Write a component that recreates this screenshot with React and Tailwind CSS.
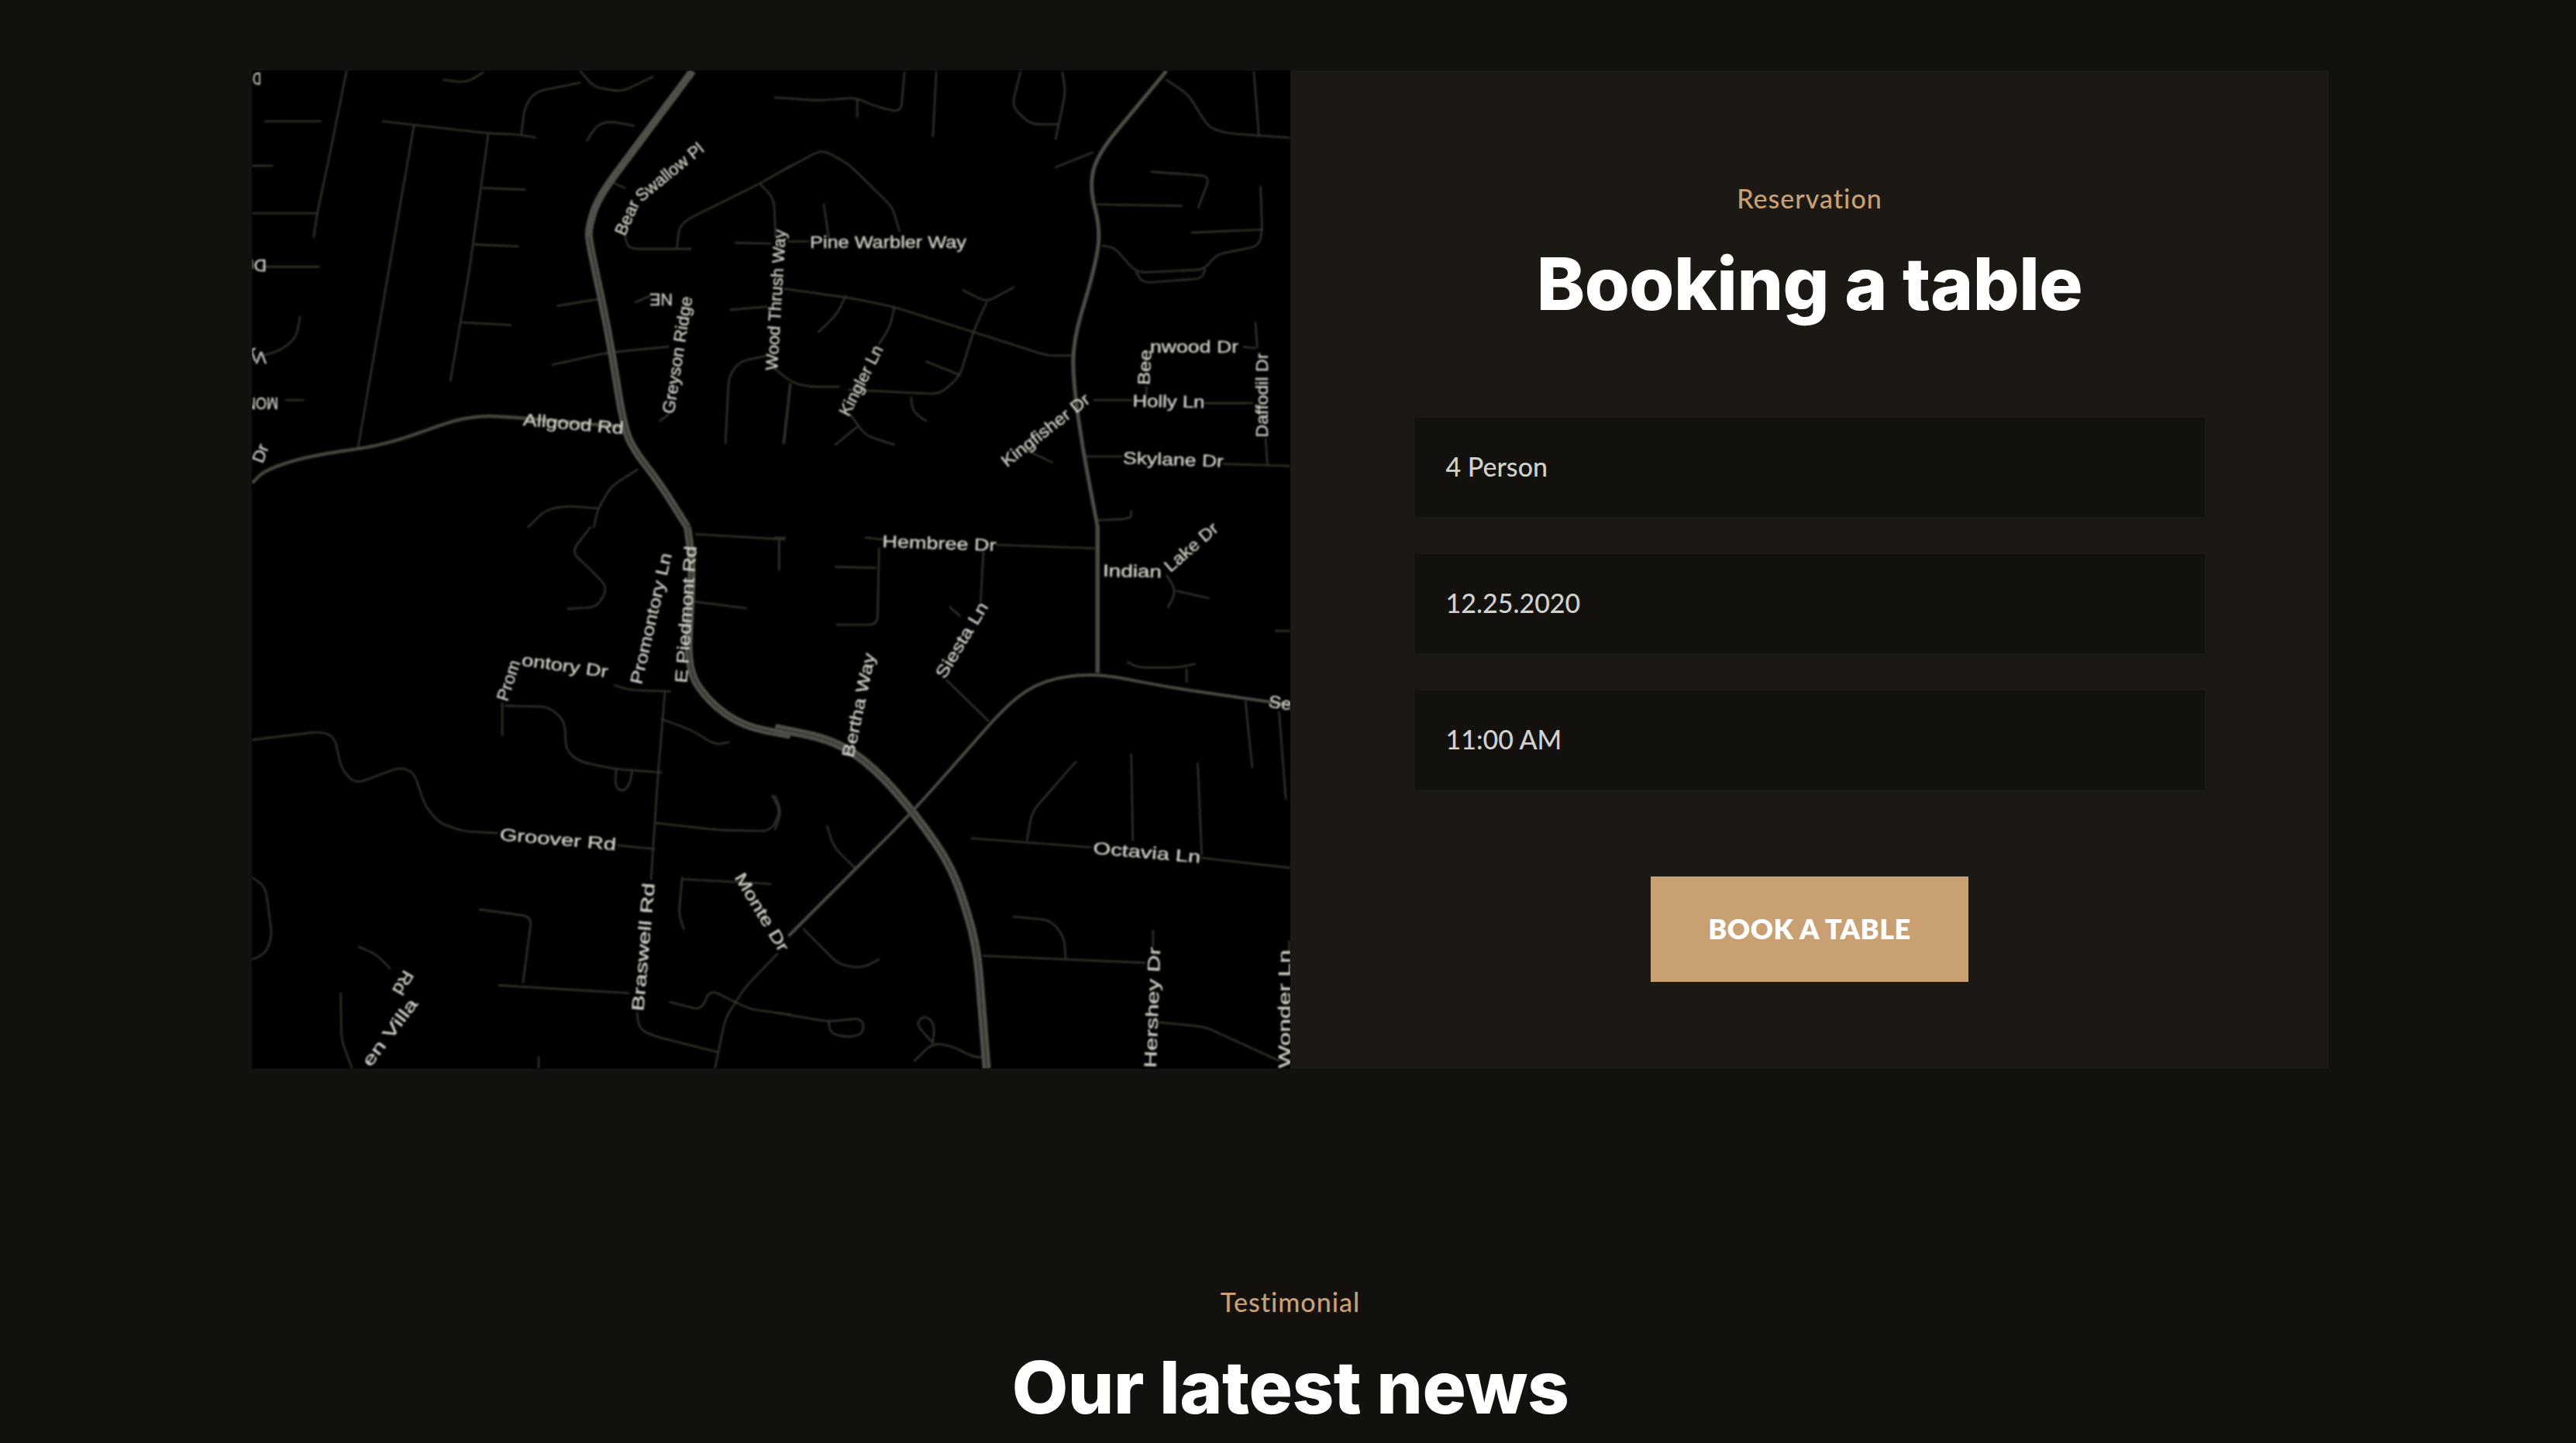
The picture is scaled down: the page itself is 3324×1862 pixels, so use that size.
const z1 = ([x, y]) => [320 + x / 2.24, 80 + y / 2.613];
const z2 = ([x, y]) => [1000 + x / 2.306, 80 + y / 2.613];
const z3 = ([x, y]) => [320 + x / 2.24, 680 + y / 2.178];
const z4 = ([x, y]) => [1000 + x / 2.306, 680 + y / 2.178];

function toPath(flat, map, r = 12) {
  const p = [];
  for (let i = 0; i < flat.length; i += 2) p.push(map([flat[i], flat[i + 1]]));
  let d = `M${p[0][0].toFixed(1)} ${p[0][1].toFixed(1)}`;
  for (let i = 1; i < p.length - 1; i++) {
    const a = p[i - 1], b = p[i], c = p[i + 1];
    const la = Math.hypot(a[0] - b[0], a[1] - b[1]);
    const lc = Math.hypot(c[0] - b[0], c[1] - b[1]);
    const ra = Math.min(r, la / 2) / la, rc = Math.min(r, lc / 2) / lc;
    d += `L${(b[0] + (a[0] - b[0]) * ra).toFixed(1)} ${(b[1] + (a[1] - b[1]) * ra).toFixed(1)}`;
    d += `Q${b[0].toFixed(1)} ${b[1].toFixed(1)} ${(b[0] + (c[0] - b[0]) * rc).toFixed(1)} ${(b[1] + (c[1] - b[1]) * rc).toFixed(1)}`;
  }
  const e = p[p.length - 1];
  return d + `L${e[0].toFixed(1)} ${e[1].toFixed(1)}`;
}

const minor1 = [
  [285,30,235,320,200,510,190,590],[12,510,200,510],[12,350,70,350],[50,200,210,200],[40,690,205,690],
  [390,200,480,212,690,240,790,245,830,255],[480,212,400,750,318,1300],[695,240,640,700,585,1075],
  [680,425,800,430],[655,615,780,622],[620,878,760,887],[790,245,800,150,830,100,960,70],
  [960,30,1000,85,1080,100,1170,50],[565,60,630,70,680,35],[150,860,140,930,90,975,40,990],[110,1140,160,1140],
  [980,265,1010,210,1050,200,1115,215],[895,822,1010,800],[880,1020,1040,980,1215,960],[1060,410,1090,425],
  [1090,590,1100,630,1280,630],[1240,630,1245,560,1270,530,1480,410,1568,350],[1480,410,1520,460,1525,590],
  [1410,610,1510,612],[1395,835,1500,825],[1120,810,1160,790],[1380,1285,1390,1060,1420,1010,1500,990],
  [1568,1090,1550,1285],[1190,1210,1215,1190],[1125,1375,1050,1430,1010,1510,1000,1568],[810,1568,860,1510,920,1497,1010,1505],
];
const minor2 = [
  [0,120,130,130,240,120,300,150,375,170,385,35],[245,125,245,185],[480,35,470,250],[730,35,705,150,760,210,840,210],
  [855,35,865,100,835,260],[1165,60,1230,110,1290,220,1340,240,1530,255],[1425,35,1440,250],[835,355,945,305],
  [0,380,140,295,220,345,350,490,370,570],[145,480,160,590],[40,605,100,605],[30,765,220,795,350,825,590,910,810,990,885,990],
  [210,790,185,850,130,910],[355,830,340,900,310,950],[560,770,630,810,710,760],[630,810,590,910,550,1060,490,1120,220,1105],
  [450,1010,550,1055],[0,1035,50,1080,100,1095,190,1095],[45,1085,25,1285],[405,1130,410,1180,450,1210],
  [225,1190,270,1260,355,1290],[245,1230,180,1290],[750,1310,825,1350],
  [975,620,1010,625,1075,710,1280,700,1310,650,1440,620,1450,570,1445,420],[1240,575,1450,565],[960,480,1210,485],
  [1120,370,1295,385,1260,490],[1075,710,1095,745,1270,730,1280,700],[950,1140,1060,1140],[1280,1150,1420,1150],
  [1430,880,1435,960],[1395,960,1430,965],[1105,1095,1105,1120],[920,1330,1030,1330],[1335,1355,1530,1362],
  [1460,1270,1465,1355],[960,1545,1060,1540,1060,1515],
];
const minor3 = [
  [1295,20,1550,35],[1535,40,1535,120],[990,0,935,70,990,120,1040,170,1010,225,925,230],[1290,210,1440,228],
  [1060,445,1100,458,1220,462],[1205,465,1185,700,1165,990],[735,495,735,585],
  [745,503,870,505,915,545,920,630,960,660,1060,680,1195,690],[1195,540,1280,570,1350,612,1390,605],
  [1065,680,1060,730,1085,745,1105,720,1110,685],
  [12,598,210,575,250,590,270,680,310,722,440,675,480,690,510,780,550,830,620,855,720,860],
  [1070,895,1175,905],[1180,832,1360,852,1510,855,1540,800,1515,755],[1260,990,1510,1003],[1255,985,1245,1090,1260,1130],
  [670,1075,820,1095,795,1280],[725,1288,1100,1310],[12,985,50,1010,70,1150,50,1200,12,1215],[320,1180,370,1200,410,1240],
  [268,1310,270,1440,300,1520],[840,1490,840,1520],[1125,1365,1130,1410,1170,1430,1355,1475],
  [1530,1200,1440,1290,1380,1380,1350,1520],[1220,1335,1310,1358,1335,1300,1450,1355,1568,1370],
];
const minor4 = [
  [270,30,320,35],[660,50,950,60],[310,60,305,275,185,275],[180,112,300,115],[620,70,612,210],[510,430,635,545],[520,225,550,250],
  [0,30,30,30],[12,50,12,120],[1165,135,1195,180,1170,225],[1195,180,1290,200],[1050,380,1080,395,1200,395,1250,385],
  [1225,400,1225,435],[1400,490,1420,675],[1500,520,1520,765],[1490,292,1533,292],[1060,640,1065,880],[1258,665,1270,920],
  [895,660,765,800,750,880],[585,875,940,900],[1270,930,1533,958],[155,840,175,900,240,960],[85,1130,190,1230,260,1240,310,1215],
  [710,1095,820,1105,860,1150,865,1215],[620,1205,1100,1225],[1125,1135,1125,1175],[1145,1392,1280,1405,1500,1500],
  [0,1365,160,1390,260,1380,265,1420,230,1435,165,1425,160,1390],[415,1500,470,1450,530,1460,590,1490,625,1490],
  [470,1450,445,1425,420,1395,445,1372,475,1395,470,1450],[0,850,20,800,0,755],[1530,1165,1530,1190],
];

const labels = [
  ["Bear", 809, 281, 47, -66], ["Swallow Pl", 864, 222, 106, -39], ["Wood Thrush Way", 1001, 387, 182, -86.5],
  ["Greyson Ridge", 874, 458, 153, -81], ["NE", 853, 386, 30, 180], ["Allgood Rd", 740, 547, 130, 5],
  ["Dr", 332, 342, 24, 180], ["Vy", 332, 461, 24, 180], ["MON", 338, 520, 42, 180], ["Dr", 336, 585, 24, -70], ["Dr", 329, 101, 16, 180],
  ["Pine Warbler Way", 1146, 312, 202, 0], ["Kingfisher Dr", 1349, 555, 138, -38], ["Kingler Ln", 1111, 491, 99, -63],
  ["Bee", 1477, 474, 46, -87], ["nwood Dr", 1541, 447, 114, 0], ["Holly Ln", 1508, 518, 93, 1], ["Daffodil Dr", 1628, 510, 109, -90],
  ["Skylane Dr", 1514, 593, 130, 2], ["Hembree Dr", 1212, 701, 147, 2], ["Indian", 1461, 737, 76, 1], ["Lake Dr", 1537, 706, 84, -41],
  ["Siesta Ln", 1241, 826, 110, -59], ["Bertha Way", 1108, 910, 137, -78], ["Se", 1652, 907, 30, 8],
  ["Octavia Ln", 1480, 1100, 139, 5], ["Hershey Dr", 1487, 1300, 156, -88], ["Wonder Ln", 1657, 1302, 153, -90],
  ["Monte Dr", 983, 1177, 114, 59], ["Braswell Rd", 830, 1222, 166, -85], ["Groover Rd", 720, 1083, 151, 5],
  ["Prom", 656, 878, 54, -72], ["ontory Dr", 729, 859, 112, 8], ["Promontory Ln", 840, 798, 173, -77],
  ["E Piedmont Rd", 885, 793, 177, -86], ["en Villa", 503, 1332, 103, -53], ["Rd", 520, 1268, 32, 120],
];

function RoadMap() {
  const dim = (list, map, k) =>
    list.map((pts, i) => (
      <path key={k + i} d={toPath(pts, map)} fill="none" stroke="#302f27" strokeWidth="2.6" strokeLinecap="round" />
    ));
  const hw = (pts, map, w = 10, c = "#50504a") => <path d={toPath(pts, map, 40)} fill="none" stroke={c} strokeWidth={w} />;
  return (
    <svg viewBox="325 91 1340 1288" className="block h-full w-full blur-[0.8px]">
      <rect x="325" y="91" width="1340" height="1288" fill="#000" />
      {dim(minor1, z1, "a")}
      {dim(minor2, z2, "b")}
      {dim(minor3, z3, "c")}
      {dim(minor4, z4, "d")}
      {hw([1285,30,1010,460,985,560,985,600,1040,900,1085,1220,1110,1300,1190,1420,1270,1568], z1)}
      {hw([985,590,1040,900,1085,1220,1110,1300,1190,1420,1270,1568], z1, 1.4, "#2b2b25")}
      {hw([1270,0,1285,100,1270,400,1330,490,1430,560,1568,585], z3)}
      {hw([1270,0,1285,100,1270,400,1330,490,1430,560,1568,585], z3, 1.4, "#2b2b25")}
      {hw([0,565,180,600,300,680,420,810,530,960,600,1170,630,1522], z4, 11)}
      {hw([0,565,180,600,300,680,420,810,530,960,600,1170,630,1522], z4, 1.4, "#2b2b25")}
      {hw([12,1420,50,1375,170,1330,400,1290,640,1190,790,1200,1080,1230], z1, 4.5, "#45453c")}
      {hw([1165,30,960,310,935,420,970,570,950,700,885,950,890,1100,915,1300,960,1568], z2, 5, "#4c4c44")}
      {hw([960,0,960,410], z4, 5.5, "#4c4c44")}
      {hw([40,1150,410,800,700,490,800,430,950,410,1170,450,1533,500], z4, 4, "#4a4a42")}
      <g fill="#cfcfc6" stroke="#cfcfc6" strokeWidth="0.4" fontFamily="'Liberation Sans', sans-serif" fontSize="22" textAnchor="middle" dominantBaseline="central">
        {labels.map(([t, x, y, w, a], i) => (
          <text key={i} x={x} y={y} textLength={w} lengthAdjust="spacingAndGlyphs" transform={`rotate(${a} ${x} ${y})`}>
            {t}
          </text>
        ))}
      </g>
    </svg>
  );
}

function Field({ children }) {
  return (
    <div className="flex h-[128px] w-[1019px] items-center bg-[#12110e] pb-[3px] pl-[40px] text-[34px] font-medium text-[#d0d0cc]">
      {children}
    </div>
  );
}

export default function App() {
  return (
    <div className="h-[1862px] w-full overflow-hidden bg-[#12110d] pt-[91px] font-['Lato',sans-serif]">
      <div className="ml-[325px] w-[2680px]">
        <div className="grid h-[1288px] grid-cols-2">
          <div className="h-[1288px] overflow-hidden bg-black">
            <RoadMap />
          </div>
          <div className="flex flex-col items-center bg-[#1c1914] pt-[145px]">
            <p className="text-[34px] leading-[40px] font-medium tracking-[1px] text-[#c8a072]">Reservation</p>
            <h2 className="mt-[35px] font-['Inter',sans-serif] text-[94px] leading-[110px] font-extrabold tracking-[-0.5px] text-white">Booking a table</h2>
            <div className="mt-[118px] flex flex-col gap-[48px]">
              <Field>4 Person</Field>
              <Field>12.25.2020</Field>
              <Field>11:00 AM</Field>
            </div>
            <button className="mt-[112px] flex h-[136px] w-[410px] items-center justify-center bg-[#c8a072] pb-[2px] text-[36px] font-extrabold tracking-[0.5px] text-white">
              BOOK A TABLE
            </button>
          </div>
        </div>
        <div className="mt-[281px] flex flex-col items-center">
          <p className="text-[34px] leading-[40px] font-medium tracking-[1px] text-[#c8a072]">Testimonial</p>
          <h2 className="mt-[35px] font-['Inter',sans-serif] text-[94px] leading-[110px] font-extrabold tracking-[-0.5px] text-white">Our latest news</h2>
        </div>
      </div>
    </div>
  );
}
